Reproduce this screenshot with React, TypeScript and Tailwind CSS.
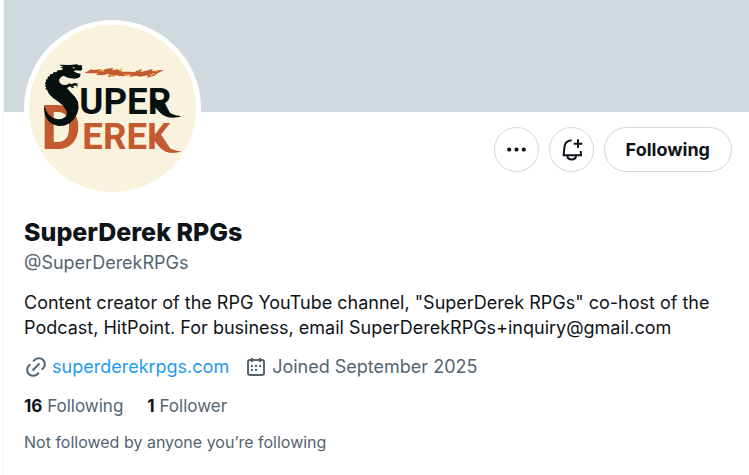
import type { ReactNode } from "react"

const STATS = [
  { count: 16, label: "Following" },
  { count: 1, label: "Follower" },
]

function Logo() {
  return (
    <svg viewBox="87 75 501 501" className="size-full" role="img" aria-label="Super Derek">
      {/* Fire breath */}
      <path
        fill="#c45a2f"
        d="M253 220l20-12 8 2 24-3-9 8 24-9 20-2-4 7 14-3 12 3 4 4 18 0 20 1 10-6 12-2-4 8 22-5 14-4-2 7 18-3 18-1-18 9-12 9-22 5 5-7-24 4-12-3-22 4 5-8-20 6-22-2 6-3-18 5-14 2 4-10-22 5-18-1 6-5z"
      />
      <path
        d="M302 209l10 5M330 225l14 4M358 212l9-6M386 226l-14-2M412 213l8-4M450 227l14-7M466 214l8-3"
        stroke="#e9b53c"
        strokeWidth="4"
        fill="none"
      />

      {/* Derek */}
      <g fill="#c45a2f" fontFamily="Roboto, sans-serif" fontWeight="700">
        <text x="122" y="447" fontSize="185">
          D
        </text>
        <text x="247" y="447" fontSize="110">
          EREK
        </text>
        <path d="M466 400c18 30 38 52 79 54-26 10-50 4-64-10-10-10-18-22-25-32z" />
      </g>

      {/* Super */}
      <g fill="#06110f">
        <text x="238" y="342" fontSize="110" fontFamily="Roboto, sans-serif" fontWeight="700">
          UPER
        </text>
        <path d="M468 294c18 32 38 50 76 55-26 9-50 3-62-9-12-11-19-23-27-35z" />
        <path d="M178 194l32 1 20-2 7 3 8-1 2 12-4 5-16-1-6 3 10 5 11 3-2 8-5 4-12 2-20-3-12-6-8 4-6 8 2 9 8 6 12 1 9-5 6 3 10-4 11 2-4 3 3 7-9-5-6 4 4 5-8-2-5-4-9 5 10 12 14 14 9 15 2 18-4 17-10 18-13 12-17 7-17 1-17-5-14-11-9-16-3-18 1-14 4 15 8 14 13 10 15 5 12-1 11-6 5-9-3-12-10-14-16-13-13-9-12-12-6-13-5-2 3-5-5-4 4-4-4-5 5-4-2-6 6-2 0-7 6-1 2-7 7 0 3-6 8 1 4-6 11-1 6-3-9-5 9-1z" />
      </g>
      <path d="M216 202l9 0-3 5z" fill="#e9b53c" />
    </svg>
  )
}

function BellPlusIcon() {
  return (
    <svg viewBox="233 80 75 75" className="size-[25px]" fill="none" stroke="currentColor" strokeWidth="6" aria-hidden="true">
      <path d="M271 90c-14 1-21 10-22 22l-2 23h52l-1-13" />
      <path d="M258 137c2 14 24 14 26 0M290 87v26M277 100h26" />
    </svg>
  )
}

function CalendarIcon() {
  return (
    <svg viewBox="0 0 24 24" className="size-6" fill="none" stroke="currentColor" strokeWidth="2" aria-hidden="true">
      <rect x="4" y="5" width="16" height="15" rx="2" />
      <path d="M8 3v4M16 3v4" />
      <path d="M7 11h2M11 11h2M15 11h2M7 15h2M11 15h2" />
    </svg>
  )
}

function Icon({ path, className }: { path: string; className: string }) {
  return (
    <svg viewBox="0 0 24 24" className={className} fill="currentColor" aria-hidden="true">
      <path d={path} />
    </svg>
  )
}

function RoundButton({ label, children }: { label: string; children: ReactNode }) {
  return (
    <button
      type="button"
      aria-label={label}
      className="flex size-[45px] items-center justify-center rounded-full border border-[#cfd9de]"
    >
      {children}
    </button>
  )
}

export default function App() {
  return (
    <main className="ml-[3px] min-h-screen border-l border-[#eff3f4] bg-white font-[Inter,sans-serif] text-[18px] text-[#0f1419]">
      <div className="h-28 bg-[#cfd9de]" />

      <div className="px-5">
        <div className="flex items-start justify-between">
          <div className="-mt-[92px] size-[177px] rounded-full bg-white p-[5px]">
            <div className="size-full overflow-hidden rounded-full bg-[#f9f2dc]">
              <Logo />
            </div>
          </div>
          <div className="-mr-[3px] flex gap-2.5 pt-[15px]">
            <RoundButton label="More">
              <Icon
                className="size-[25px]"
                path="M3 12c0-1.1.9-2 2-2s2 .9 2 2-.9 2-2 2-2-.9-2-2zm9 2c1.1 0 2-.9 2-2s-.9-2-2-2-2 .9-2 2 .9 2 2 2zm7 0c1.1 0 2-.9 2-2s-.9-2-2-2-2 .9-2 2 .9 2 2 2z"
              />
            </RoundButton>
            <RoundButton label="Notify">
              <BellPlusIcon />
            </RoundButton>
            <button type="button" className="h-[45px] rounded-full border border-[#cfd9de] px-[21px] font-bold">
              Following
            </button>
          </div>
        </div>

        <h1 className="mt-5 text-[25px] leading-[30px] font-extrabold">SuperDerek RPGs</h1>
        <p className="mt-1 leading-6 text-[#536471]">@SuperDerekRPGs</p>

        <p className="mt-[15px] leading-[25px]">
          Content creator of the RPG YouTube channel, "SuperDerek RPGs" co-host of the Podcast, HitPoint. For business,
          email SuperDerekRPGs+inquiry@gmail.com
        </p>

        <div className="mt-[14px] flex flex-wrap gap-x-[15px] leading-[25px] text-[#536471]">
          <a href="#website" className="flex items-center gap-1 text-[#1d9bf0]">
            <Icon
              className="size-6 text-[#536471]"
              path="M18.36 5.64c-1.95-1.96-5.11-1.96-7.07 0L9.88 7.05 8.46 5.64l1.42-1.42c2.73-2.73 7.16-2.73 9.9 0 2.73 2.74 2.73 7.17 0 9.9l-1.42 1.42-1.41-1.42 1.41-1.41c1.96-1.96 1.96-5.12 0-7.07zm-2.12 3.53l-7.07 7.07-1.41-1.41 7.07-7.07 1.41 1.41zm-12.02.71l1.42-1.42 1.41 1.42-1.41 1.41c-1.96 1.96-1.96 5.12 0 7.07 1.95 1.96 5.11 1.96 7.07 0l1.41-1.41 1.42 1.41-1.42 1.42c-2.73 2.73-7.16 2.73-9.9 0-2.73-2.74-2.73-7.17 0-9.9z"
            />
            superderekrpgs.com
          </a>
          <span className="flex items-center gap-1">
            <CalendarIcon />
            Joined September 2025
          </span>
        </div>

        <div className="mt-[15px] flex gap-6 text-[17px] leading-6">
          {STATS.map(({ count, label }) => (
            <a key={label} href={`#${label.toLowerCase()}`} className="text-[#536471]">
              <span className="font-bold text-[#0f1419]">{count}</span> {label}
            </a>
          ))}
        </div>

        <p className="mt-[14px] text-[16px] leading-5 text-[#536471]">Not followed by anyone you’re following</p>
      </div>
    </main>
  )
}
